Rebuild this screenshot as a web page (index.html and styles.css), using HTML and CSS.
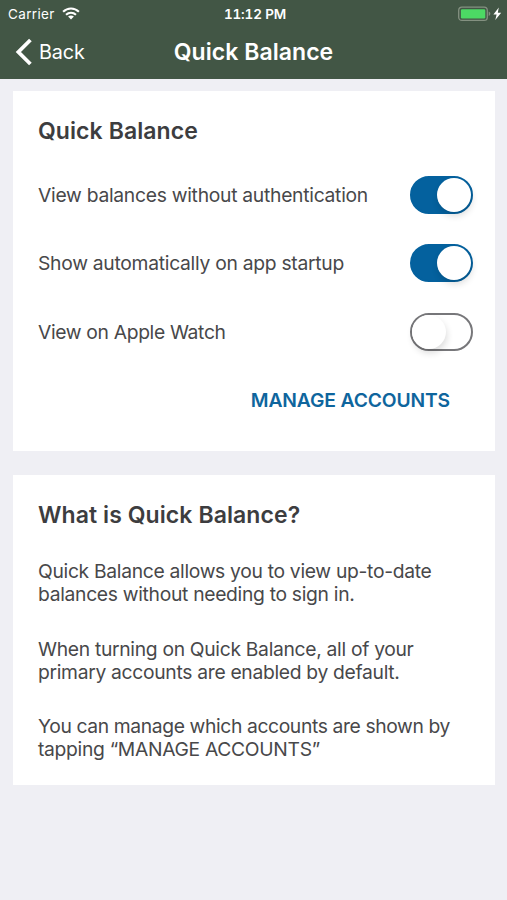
FILE: index.html
```html
<!DOCTYPE html>
<html lang="en">
<head>
<meta charset="utf-8">
<title>Quick Balance</title>
<link rel="stylesheet" href="styles.css">
</head>
<body>
<header class="header">
  <div class="status">
    <div class="status-left">
      <span class="carrier">Carrier</span>
      <svg class="wifi" width="18" height="13" viewBox="0 0 18 13" fill="none" stroke="#fff" stroke-width="2.1">
        <path d="M1.1 4.8C5.6.4 12.4.4 16.9 4.8M4 7.8c2.9-2.6 7.1-2.6 10 0"/>
        <path d="M9 12.5 6.1 9.6c1.7-1.4 4.1-1.4 5.8 0z" fill="#fff" stroke="none"/>
      </svg>
    </div>
    <span class="clock">11:12 PM</span>
    <div class="status-right">
      <svg width="45" height="16" viewBox="0 0 45 16">
        <rect x=".7" y="1.2" width="28.6" height="13.2" rx="3.2" fill="none" stroke="#849181" stroke-width="1.3"/>
        <rect x="2.9" y="3.2" width="24.4" height="9.2" rx="1.2" fill="#4cd964"/>
        <path d="M30.7 5.6c2.2.8 2.2 3.6 0 4.4z" fill="#849181"/>
        <path d="M40.8 1.6 35.4 8.6h3.2L37.3 14 43.2 6.8H39.8z" fill="#fff"/>
      </svg>
    </div>
  </div>
  <nav class="nav">
    <a class="back"><svg width="17" height="28" viewBox="0 0 17 28" fill="none" stroke="#fff" stroke-width="3.8"><path d="M15.4 2 3.4 14l12 12"/></svg><span>Back</span></a>
    <h1 class="title">Quick Balance</h1>
  </nav>
</header>
<main class="content">
  <section class="card settings">
    <h2 class="heading">Quick Balance</h2>
    <div class="row"><span>View balances without authentication</span><i class="switch on"></i></div>
    <div class="row"><span>Show automatically on app startup</span><i class="switch on"></i></div>
    <div class="row"><span class="watch">View on Apple Watch</span><i class="switch"></i></div>
    <a class="manage">MANAGE ACCOUNTS</a>
  </section>
  <section class="card about">
    <h2 class="heading">What is Quick Balance?</h2>
    <p>Quick Balance allows you to view up-to-date<br>balances without needing to sign in.</p>
    <p>When turning on Quick Balance, all of your<br>primary accounts are enabled by default.</p>
    <p><span class="tight">You can manage which accounts are shown by</span><br>tapping “MANAGE ACCOUNTS”</p>
  </section>
</main>
</body>
</html>
```
FILE: styles.css
```css
* { box-sizing: border-box; }
body { margin: 0; min-height: 900px; background: #efeff4; color: #48484a; font-family: Inter, "Liberation Sans", sans-serif; font-size: 19.3px; }
h1, h2, p { margin: 0; }
svg { display: block; }
.header { height: 79px; background: #425645; color: #fff; }
.status { display: grid; grid-template-columns: 1fr auto 1fr; height: 27px; padding: 0 5px 0 8px; font-size: 13.5px; align-items: center; }
.status-left { display: flex; align-items: center; gap: 7px; }
.carrier { letter-spacing: .35px; }
.status-right { display: flex; justify-content: flex-end; margin-right: -1px; }
.clock { font-weight: 580; font-variant-numeric: tabular-nums; letter-spacing: -.15px; }
.nav { display: grid; grid-template-columns: 1fr auto 1fr; height: 50px; align-items: center; padding: 0 15px; }
.back { display: flex; align-items: center; gap: 7px; font-size: 19.8px; letter-spacing: -.1px; }
.title { font-size: 23px; font-weight: 580; line-height: 28px; letter-spacing: .05px; }
.content { display: flex; flex-direction: column; gap: 24px; padding: 12px 12px 0 13px; }
.card { background: #fff; padding: 0 22px 0 25px; }
.settings { height: 360px; }
.about { height: 310px; }
.heading { height: 70px; padding-top: 26px; font-size: 23px; line-height: 28px; font-weight: 580; letter-spacing: .08px; color: #3d3d3f; }
.row { display: flex; height: 68.3px; align-items: center; justify-content: space-between; letter-spacing: -.28px; }
.watch { letter-spacing: -.34px; }
.switch { position: relative; width: 63px; height: 38px; border: 2px solid #77777a; border-radius: 19px; background: #fff; }
.switch::after { content: ""; position: absolute; left: 0; top: 0; width: 34px; height: 34px; border-radius: 50%; background: #fff; box-shadow: 1px 4px 7px rgba(0,0,0,.14); }
.switch.on { background: #04619e; border-color: #04619e; }
.switch.on::after { left: 25px; }
.manage { display: flex; height: 68px; align-items: center; justify-content: flex-end; padding-right: 23px; color: #0e659d; font-weight: 560; letter-spacing: -.14px; }
.about p { line-height: 23px; margin-bottom: 31.5px; white-space: nowrap; letter-spacing: -.31px; }
.about .tight { letter-spacing: -.38px; }
.about .heading { height: 85px; }
```
